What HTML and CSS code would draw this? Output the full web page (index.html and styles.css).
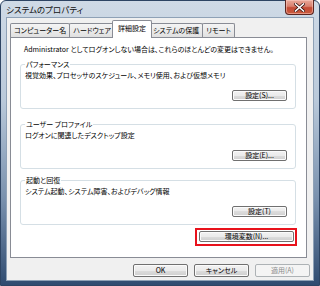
FILE: index.html
```html
<!DOCTYPE html>
<html lang="ja">
<head>
<meta charset="utf-8">
<link rel="stylesheet" href="styles.css">
</head>
<body>
<div class="window">
  <div class="titlebar">
    <span class="title">システムのプロパティ</span>
    <button class="close" aria-label="閉じる">
      <svg width="11" height="9" viewBox="0 0 11 9"><path d="M1.5 1 L9.5 8 M9.5 1 L1.5 8" stroke="#3a1410" stroke-width="3" stroke-linecap="square"/><path d="M1.5 1 L9.5 8 M9.5 1 L1.5 8" stroke="#ffffff" stroke-width="1.6" stroke-linecap="square"/></svg>
    </button>
  </div>
  <div class="client">
    <div class="tabs">
      <div class="tab">コンピューター名</div>
      <div class="tab">ハードウェア</div>
      <div class="tab active">詳細設定</div>
      <div class="tab">システムの保護</div>
      <div class="tab">リモート</div>
    </div>
    <div class="panel">
      <p class="note">Administrator としてログオンしない場合は、これらのほとんどの変更はできません。</p>
      <fieldset class="group g1">
        <legend>パフォーマンス</legend>
        <p class="desc">視覚効果、プロセッサのスケジュール、メモリ使用、および仮想メモリ</p>
        <div class="row"><button class="btn">設定(S)...</button></div>
      </fieldset>
      <fieldset class="group g2">
        <legend>ユーザー プロファイル</legend>
        <p class="desc">ログオンに関連したデスクトップ設定</p>
        <div class="row"><button class="btn">設定(E)...</button></div>
      </fieldset>
      <fieldset class="group g3">
        <legend>起動と回復</legend>
        <p class="desc">システム起動、システム障害、およびデバッグ情報</p>
        <div class="row"><button class="btn">設定(T)</button></div>
      </fieldset>
      <div class="env">
        <div class="highlight"><button class="btn wide">環境変数(N)...</button></div>
      </div>
    </div>
    <div class="footer">
      <button class="btn">OK</button>
      <button class="btn">キャンセル</button>
      <button class="btn" disabled>適用(A)</button>
    </div>
  </div>
</div>
</body>
</html>
```

FILE: styles.css
```css
* { box-sizing: border-box; }
html, body { margin: 0; padding: 0; }
body {
  width: 320px;
  height: 286px;
  overflow: hidden;
  background: #ffffff;
  font-family: "Noto Sans CJK JP", "Noto Sans", sans-serif;
  font-size: 7px;
  font-feature-settings: "palt";
  color: #000;
}
.window {
  width: 320px;
  height: 286px;
  display: flex;
  flex-direction: column;
  border: 1px solid #2d4463;
  border-radius: 6px 6px 0 0;
  background: linear-gradient(180deg, #cfdae6 0%, #b9c9da 35%, #7890ad 70%, #2f4b70 100%);
}
.titlebar {
  height: 17px;
  display: flex;
  align-items: flex-start;
  justify-content: space-between;
}
.title {
  margin: 3px 0 0 5px;
  font-size: 8.5px;
  line-height: 11px;
  color: #111;
}
.close {
  margin: -1px 5px 0 0;
  width: 29px;
  height: 15px;
  padding: 0;
  border: 1px solid #5a2520;
  border-top: none;
  border-radius: 0 0 4px 4px;
  background: linear-gradient(180deg, #e9a99a 0%, #d9806e 45%, #c44b35 55%, #c95a3e 100%);
  box-shadow: inset 0 0 0 1px rgba(255, 210, 200, 0.5);
  display: flex;
  align-items: center;
  justify-content: center;
}
.client {
  margin: 0 6px;
  height: 262px;
  background: #f0f0f0;
  box-shadow: 0 0 0 1px #8ea1b6;
  display: flex;
  flex-direction: column;
}
.tabs {
  margin: 2px 0 -1px 3px;
  height: 18px;
  display: flex;
  align-items: flex-end;
}
.tab {
  height: 14px;
  margin-bottom: 1px;
  margin-left: -1px;
  padding: 0 3px;
  line-height: 12px;
  border: 1px solid #898c95;
  border-bottom: none;
  border-radius: 2px 2px 0 0;
  background: linear-gradient(180deg, #f4f4f4 0%, #ebebeb 50%, #e0e0e0 100%);
  white-space: nowrap;
}
.tab:first-child { margin-left: 0; }
.tab.active {
  height: 18px;
  margin: 0 -2px 0 -3px;
  padding: 0 5px;
  line-height: 14px;
  background: #fff;
  position: relative;
  z-index: 1;
}
.panel {
  margin: 0 6px 0 3px;
  height: 221px;
  background: #fff;
  border: 1px solid #898c95;
  padding: 6px 10px 0 9px;
}
.note {
  margin: 0 0 0 4px;
  line-height: 10px;
  white-space: nowrap;
}
.group {
  margin: 5px 0 0 0;
  padding: 0 8px 7px 4px;
  border: 1px solid #d5dfe5;
  border-radius: 3px;
  min-width: 0;
}
.group legend {
  padding: 0 1px;
  line-height: 10px;
}
.g2 { margin-top: 10px; }
.g3 { margin-top: 6px; }
.desc {
  margin: 1px 0 0 0;
  line-height: 10px;
  white-space: nowrap;
}
.row {
  display: flex;
  justify-content: flex-end;
  margin-top: 10px;
}
.btn {
  width: 55px;
  height: 11px;
  padding: 0;
  font: inherit;
  font-feature-settings: "palt";
  line-height: 9px;
  color: #000;
  border: 1px solid #707070;
  border-radius: 2px;
  background: linear-gradient(180deg, #f2f2f2 0%, #ebebeb 50%, #dddddd 50%, #cfcfcf 100%);
  box-shadow: inset 0 0 0 1px #fbfbfb;
}
.btn.wide { width: 95px; }
.btn:disabled {
  color: #8d8d8d;
  border-color: #adb2b5;
  background: #f4f4f4;
  box-shadow: none;
}
.env {
  display: flex;
  justify-content: flex-end;
  margin-top: 3px;
  margin-right: -1px;
}
.highlight {
  border: 2px solid #e8121c;
  padding: 1px 1px 2px 2px;
  display: flex;
}
.footer {
  margin: 6px 3px 0 0;
  display: flex;
  justify-content: flex-end;
  gap: 6px;
}
.footer .btn { height: 13px; line-height: 11px; }
```
